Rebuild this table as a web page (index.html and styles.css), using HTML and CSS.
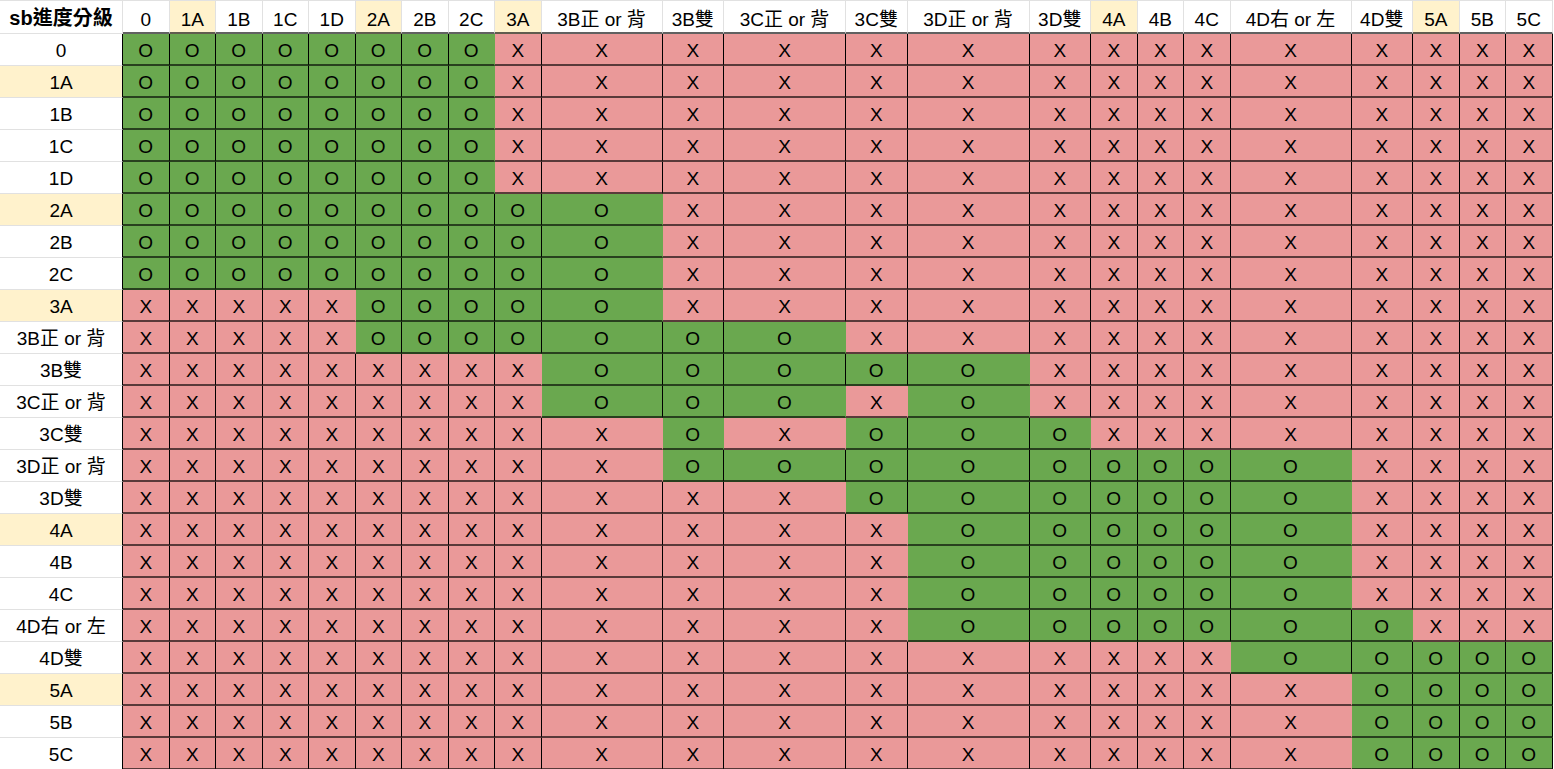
FILE: index.html
```html
<!DOCTYPE html>
<html lang="zh-Hant">
<head>
<meta charset="utf-8">
<title>sb進度分級</title>
<link rel="stylesheet" href="styles.css">
</head>
<body>
<div class="sheet">
  <div class="h corner">sb進度分級</div>
  <div class="h">0</div><div class="h y">1A</div><div class="h">1B</div><div class="h">1C</div><div class="h">1D</div><div class="h y">2A</div><div class="h">2B</div><div class="h">2C</div><div class="h y">3A</div><div class="h">3B正 or 背</div><div class="h">3B雙</div><div class="h">3C正 or 背</div><div class="h">3C雙</div><div class="h">3D正 or 背</div><div class="h">3D雙</div><div class="h y">4A</div><div class="h">4B</div><div class="h">4C</div><div class="h">4D右 or 左</div><div class="h">4D雙</div><div class="h y">5A</div><div class="h">5B</div><div class="h">5C</div>

  <div class="lab">0</div>
  <div class="g">O</div><div class="g">O</div><div class="g">O</div><div class="g">O</div><div class="g">O</div><div class="g">O</div><div class="g">O</div><div class="g n">O</div><div class="r">X</div><div class="r">X</div><div class="r">X</div><div class="r">X</div><div class="r">X</div><div class="r">X</div><div class="r">X</div><div class="r">X</div><div class="r">X</div><div class="r">X</div><div class="r">X</div><div class="r">X</div><div class="r">X</div><div class="r">X</div><div class="r">X</div>

  <div class="lab y">1A</div>
  <div class="g">O</div><div class="g">O</div><div class="g">O</div><div class="g">O</div><div class="g">O</div><div class="g">O</div><div class="g">O</div><div class="g n">O</div><div class="r">X</div><div class="r">X</div><div class="r">X</div><div class="r">X</div><div class="r">X</div><div class="r">X</div><div class="r">X</div><div class="r">X</div><div class="r">X</div><div class="r">X</div><div class="r">X</div><div class="r">X</div><div class="r">X</div><div class="r">X</div><div class="r">X</div>

  <div class="lab">1B</div>
  <div class="g">O</div><div class="g">O</div><div class="g">O</div><div class="g">O</div><div class="g">O</div><div class="g">O</div><div class="g">O</div><div class="g n">O</div><div class="r">X</div><div class="r">X</div><div class="r">X</div><div class="r">X</div><div class="r">X</div><div class="r">X</div><div class="r">X</div><div class="r">X</div><div class="r">X</div><div class="r">X</div><div class="r">X</div><div class="r">X</div><div class="r">X</div><div class="r">X</div><div class="r">X</div>

  <div class="lab">1C</div>
  <div class="g">O</div><div class="g">O</div><div class="g">O</div><div class="g">O</div><div class="g">O</div><div class="g">O</div><div class="g">O</div><div class="g n">O</div><div class="r">X</div><div class="r">X</div><div class="r">X</div><div class="r">X</div><div class="r">X</div><div class="r">X</div><div class="r">X</div><div class="r">X</div><div class="r">X</div><div class="r">X</div><div class="r">X</div><div class="r">X</div><div class="r">X</div><div class="r">X</div><div class="r">X</div>

  <div class="lab">1D</div>
  <div class="g">O</div><div class="g">O</div><div class="g">O</div><div class="g">O</div><div class="g">O</div><div class="g">O</div><div class="g">O</div><div class="g n">O</div><div class="r">X</div><div class="r">X</div><div class="r">X</div><div class="r">X</div><div class="r">X</div><div class="r">X</div><div class="r">X</div><div class="r">X</div><div class="r">X</div><div class="r">X</div><div class="r">X</div><div class="r">X</div><div class="r">X</div><div class="r">X</div><div class="r">X</div>

  <div class="lab y">2A</div>
  <div class="g">O</div><div class="g">O</div><div class="g">O</div><div class="g">O</div><div class="g">O</div><div class="g">O</div><div class="g">O</div><div class="g">O</div><div class="g">O</div><div class="g n">O</div><div class="r">X</div><div class="r">X</div><div class="r">X</div><div class="r">X</div><div class="r">X</div><div class="r">X</div><div class="r">X</div><div class="r">X</div><div class="r">X</div><div class="r">X</div><div class="r">X</div><div class="r">X</div><div class="r">X</div>

  <div class="lab">2B</div>
  <div class="g">O</div><div class="g">O</div><div class="g">O</div><div class="g">O</div><div class="g">O</div><div class="g">O</div><div class="g">O</div><div class="g">O</div><div class="g">O</div><div class="g n">O</div><div class="r">X</div><div class="r">X</div><div class="r">X</div><div class="r">X</div><div class="r">X</div><div class="r">X</div><div class="r">X</div><div class="r">X</div><div class="r">X</div><div class="r">X</div><div class="r">X</div><div class="r">X</div><div class="r">X</div>

  <div class="lab">2C</div>
  <div class="g">O</div><div class="g">O</div><div class="g">O</div><div class="g">O</div><div class="g">O</div><div class="g">O</div><div class="g">O</div><div class="g">O</div><div class="g">O</div><div class="g n">O</div><div class="r">X</div><div class="r">X</div><div class="r">X</div><div class="r">X</div><div class="r">X</div><div class="r">X</div><div class="r">X</div><div class="r">X</div><div class="r">X</div><div class="r">X</div><div class="r">X</div><div class="r">X</div><div class="r">X</div>

  <div class="lab y">3A</div>
  <div class="r">X</div><div class="r">X</div><div class="r">X</div><div class="r">X</div><div class="r n">X</div><div class="g">O</div><div class="g">O</div><div class="g">O</div><div class="g">O</div><div class="g n">O</div><div class="r">X</div><div class="r">X</div><div class="r">X</div><div class="r">X</div><div class="r">X</div><div class="r">X</div><div class="r">X</div><div class="r">X</div><div class="r">X</div><div class="r">X</div><div class="r">X</div><div class="r">X</div><div class="r">X</div>

  <div class="lab">3B正 or 背</div>
  <div class="r">X</div><div class="r">X</div><div class="r">X</div><div class="r">X</div><div class="r n">X</div><div class="g">O</div><div class="g">O</div><div class="g">O</div><div class="g">O</div><div class="g">O</div><div class="g">O</div><div class="g n">O</div><div class="r">X</div><div class="r">X</div><div class="r">X</div><div class="r">X</div><div class="r">X</div><div class="r">X</div><div class="r">X</div><div class="r">X</div><div class="r">X</div><div class="r">X</div><div class="r">X</div>

  <div class="lab">3B雙</div>
  <div class="r">X</div><div class="r">X</div><div class="r">X</div><div class="r">X</div><div class="r">X</div><div class="r">X</div><div class="r">X</div><div class="r">X</div><div class="r n">X</div><div class="g">O</div><div class="g">O</div><div class="g">O</div><div class="g">O</div><div class="g n">O</div><div class="r">X</div><div class="r">X</div><div class="r">X</div><div class="r">X</div><div class="r">X</div><div class="r">X</div><div class="r">X</div><div class="r">X</div><div class="r">X</div>

  <div class="lab">3C正 or 背</div>
  <div class="r">X</div><div class="r">X</div><div class="r">X</div><div class="r">X</div><div class="r">X</div><div class="r">X</div><div class="r">X</div><div class="r">X</div><div class="r n">X</div><div class="g">O</div><div class="g">O</div><div class="g n">O</div><div class="r n">X</div><div class="g n">O</div><div class="r">X</div><div class="r">X</div><div class="r">X</div><div class="r">X</div><div class="r">X</div><div class="r">X</div><div class="r">X</div><div class="r">X</div><div class="r">X</div>

  <div class="lab">3C雙</div>
  <div class="r">X</div><div class="r">X</div><div class="r">X</div><div class="r">X</div><div class="r">X</div><div class="r">X</div><div class="r">X</div><div class="r">X</div><div class="r">X</div><div class="r n">X</div><div class="g n">O</div><div class="r n">X</div><div class="g">O</div><div class="g">O</div><div class="g n">O</div><div class="r">X</div><div class="r">X</div><div class="r">X</div><div class="r">X</div><div class="r">X</div><div class="r">X</div><div class="r">X</div><div class="r">X</div>

  <div class="lab">3D正 or 背</div>
  <div class="r">X</div><div class="r">X</div><div class="r">X</div><div class="r">X</div><div class="r">X</div><div class="r">X</div><div class="r">X</div><div class="r">X</div><div class="r">X</div><div class="r n">X</div><div class="g">O</div><div class="g">O</div><div class="g">O</div><div class="g">O</div><div class="g">O</div><div class="g">O</div><div class="g">O</div><div class="g">O</div><div class="g n">O</div><div class="r">X</div><div class="r">X</div><div class="r">X</div><div class="r">X</div>

  <div class="lab">3D雙</div>
  <div class="r">X</div><div class="r">X</div><div class="r">X</div><div class="r">X</div><div class="r">X</div><div class="r">X</div><div class="r">X</div><div class="r">X</div><div class="r">X</div><div class="r">X</div><div class="r">X</div><div class="r n">X</div><div class="g">O</div><div class="g">O</div><div class="g">O</div><div class="g">O</div><div class="g">O</div><div class="g">O</div><div class="g n">O</div><div class="r">X</div><div class="r">X</div><div class="r">X</div><div class="r">X</div>

  <div class="lab y">4A</div>
  <div class="r">X</div><div class="r">X</div><div class="r">X</div><div class="r">X</div><div class="r">X</div><div class="r">X</div><div class="r">X</div><div class="r">X</div><div class="r">X</div><div class="r">X</div><div class="r">X</div><div class="r">X</div><div class="r n">X</div><div class="g">O</div><div class="g">O</div><div class="g">O</div><div class="g">O</div><div class="g">O</div><div class="g n">O</div><div class="r">X</div><div class="r">X</div><div class="r">X</div><div class="r">X</div>

  <div class="lab">4B</div>
  <div class="r">X</div><div class="r">X</div><div class="r">X</div><div class="r">X</div><div class="r">X</div><div class="r">X</div><div class="r">X</div><div class="r">X</div><div class="r">X</div><div class="r">X</div><div class="r">X</div><div class="r">X</div><div class="r n">X</div><div class="g">O</div><div class="g">O</div><div class="g">O</div><div class="g">O</div><div class="g">O</div><div class="g n">O</div><div class="r">X</div><div class="r">X</div><div class="r">X</div><div class="r">X</div>

  <div class="lab">4C</div>
  <div class="r">X</div><div class="r">X</div><div class="r">X</div><div class="r">X</div><div class="r">X</div><div class="r">X</div><div class="r">X</div><div class="r">X</div><div class="r">X</div><div class="r">X</div><div class="r">X</div><div class="r">X</div><div class="r n">X</div><div class="g">O</div><div class="g">O</div><div class="g">O</div><div class="g">O</div><div class="g">O</div><div class="g n">O</div><div class="r">X</div><div class="r">X</div><div class="r">X</div><div class="r">X</div>

  <div class="lab">4D右 or 左</div>
  <div class="r">X</div><div class="r">X</div><div class="r">X</div><div class="r">X</div><div class="r">X</div><div class="r">X</div><div class="r">X</div><div class="r">X</div><div class="r">X</div><div class="r">X</div><div class="r">X</div><div class="r">X</div><div class="r n">X</div><div class="g">O</div><div class="g">O</div><div class="g">O</div><div class="g">O</div><div class="g">O</div><div class="g">O</div><div class="g n">O</div><div class="r">X</div><div class="r">X</div><div class="r">X</div>

  <div class="lab">4D雙</div>
  <div class="r">X</div><div class="r">X</div><div class="r">X</div><div class="r">X</div><div class="r">X</div><div class="r">X</div><div class="r">X</div><div class="r">X</div><div class="r">X</div><div class="r">X</div><div class="r">X</div><div class="r">X</div><div class="r">X</div><div class="r">X</div><div class="r">X</div><div class="r">X</div><div class="r">X</div><div class="r n">X</div><div class="g">O</div><div class="g">O</div><div class="g">O</div><div class="g">O</div><div class="g">O</div>

  <div class="lab y">5A</div>
  <div class="r">X</div><div class="r">X</div><div class="r">X</div><div class="r">X</div><div class="r">X</div><div class="r">X</div><div class="r">X</div><div class="r">X</div><div class="r">X</div><div class="r">X</div><div class="r">X</div><div class="r">X</div><div class="r">X</div><div class="r">X</div><div class="r">X</div><div class="r">X</div><div class="r">X</div><div class="r">X</div><div class="r n">X</div><div class="g">O</div><div class="g">O</div><div class="g">O</div><div class="g">O</div>

  <div class="lab">5B</div>
  <div class="r">X</div><div class="r">X</div><div class="r">X</div><div class="r">X</div><div class="r">X</div><div class="r">X</div><div class="r">X</div><div class="r">X</div><div class="r">X</div><div class="r">X</div><div class="r">X</div><div class="r">X</div><div class="r">X</div><div class="r">X</div><div class="r">X</div><div class="r">X</div><div class="r">X</div><div class="r">X</div><div class="r n">X</div><div class="g">O</div><div class="g">O</div><div class="g">O</div><div class="g">O</div>

  <div class="lab">5C</div>
  <div class="r">X</div><div class="r">X</div><div class="r">X</div><div class="r">X</div><div class="r">X</div><div class="r">X</div><div class="r">X</div><div class="r">X</div><div class="r">X</div><div class="r">X</div><div class="r">X</div><div class="r">X</div><div class="r">X</div><div class="r">X</div><div class="r">X</div><div class="r">X</div><div class="r">X</div><div class="r">X</div><div class="r n">X</div><div class="g">O</div><div class="g">O</div><div class="g">O</div><div class="g">O</div>
</div>
</body>
</html>
```

FILE: styles.css
```css
html, body {
  margin: 0;
  padding: 0;
  background: #ffffff;
}

body {
  font-family: "Liberation Sans", Arial, "Noto Sans CJK TC", sans-serif;
  color: #000000;
  overflow: hidden;
}

.sheet {
  display: grid;
  grid-template-columns:
    123px
    repeat(9, 46.5px)
    121px 61.5px
    122px 61.5px
    122px 61.5px
    repeat(3, 46.5px)
    121px 61.5px
    repeat(3, 46.5px);
  grid-template-rows: 34px repeat(23, 32px);
}

.sheet > div {
  box-sizing: border-box;
  display: flex;
  align-items: center;
  justify-content: center;
  font-size: 19px;
  line-height: 1;
  white-space: nowrap;
}

/* header row */
.h {
  background: #ffffff;
  border-top: 1px solid #e1e1e1;
  border-right: 1px solid #e1e1e1;
  border-bottom: 2px solid rgba(0, 0, 0, 0.62);
  padding-top: 5px;
}

.sheet > .corner {
  font-weight: bold;
  font-size: 20px;
  border-bottom: 1px solid #e1e1e1;
  padding-top: 2px;
}

/* row labels */
.lab {
  background: #ffffff;
  border-right: 1px solid #000000;
  border-bottom: 1px solid #e1e1e1;
  padding-top: 2px;
}

.y {
  background: #fff2cc;
}

/* data cells */
.g,
.r {
  border-right: 1px solid #000000;
  border-bottom: 2px solid rgba(0, 0, 0, 0.62);
  padding-top: 2px;
}

.g {
  background: #6aa84f;
}

.r {
  background: #ea9999;
}

.n {
  border-right-color: transparent;
}
```
